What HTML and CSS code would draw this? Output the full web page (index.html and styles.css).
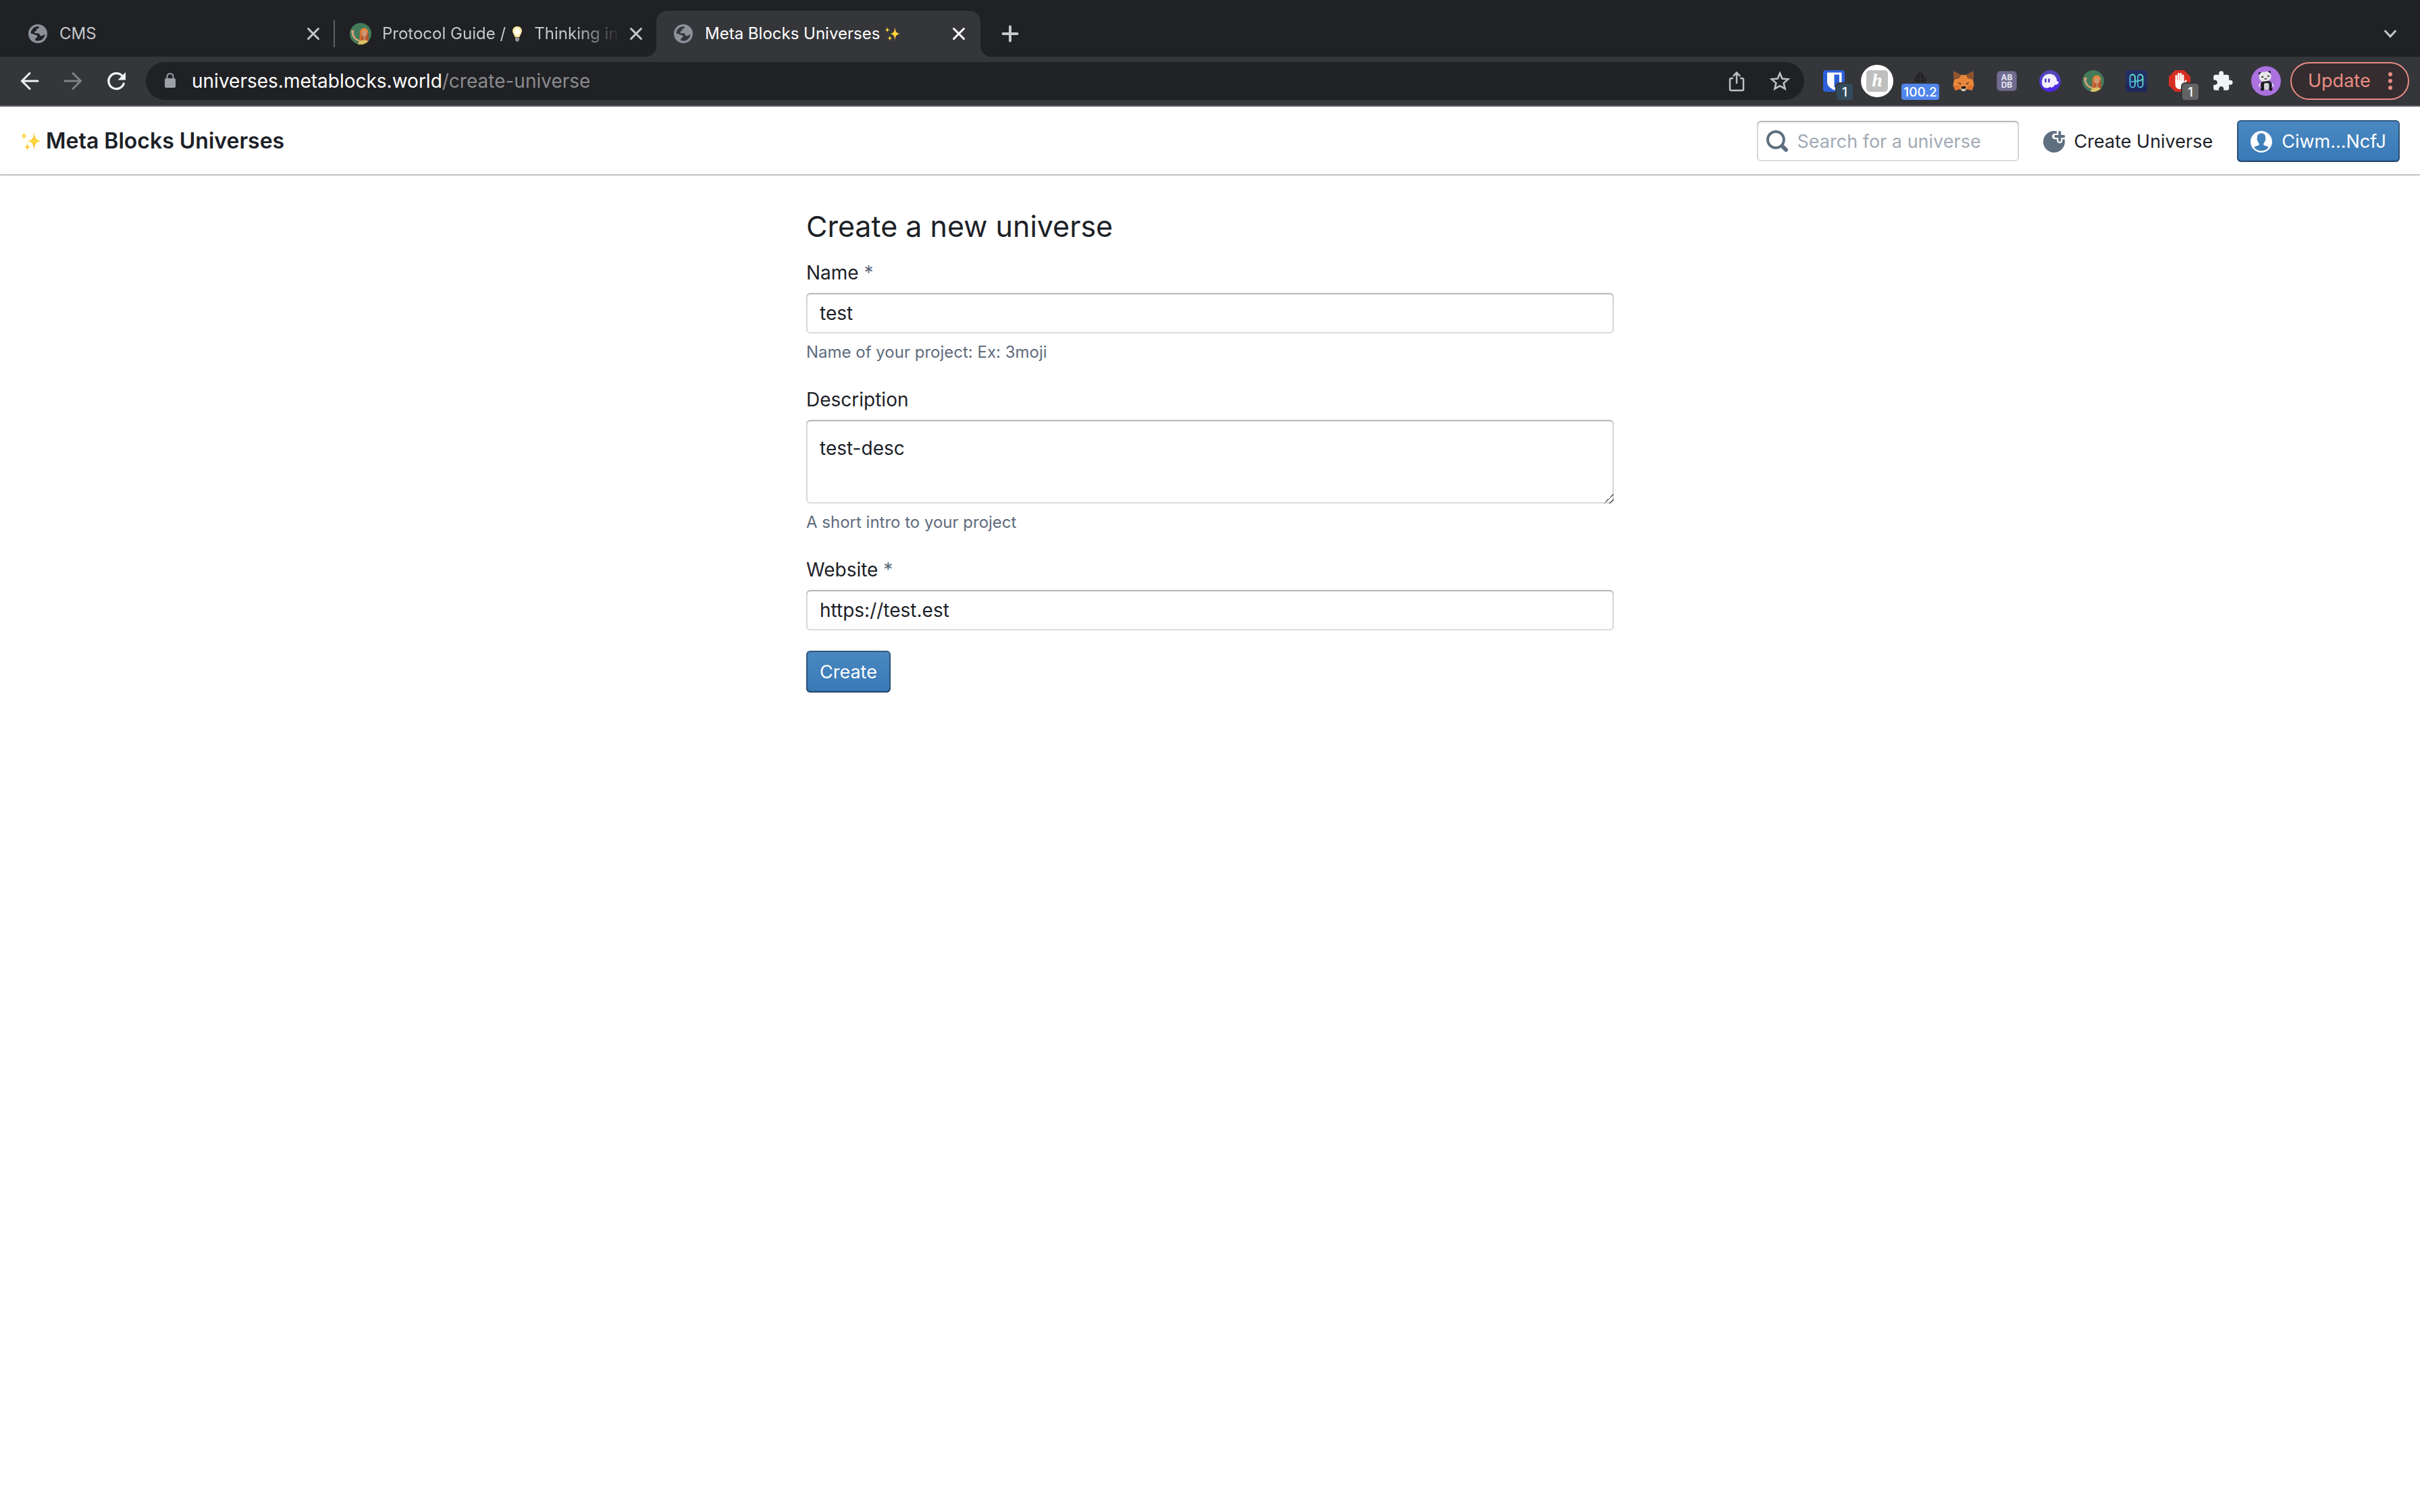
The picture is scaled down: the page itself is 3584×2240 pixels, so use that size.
FILE: index.html
```html
<!DOCTYPE html>
<html lang="en">
<head>
    <meta charset="UTF-8">
    <meta name="viewport" content="width=device-width, initial-scale=1.0">
    <title>Meta Blocks Universes</title>
    <link rel="stylesheet" href="styles.css">
</head>
<body>
    <!-- shared icons -->
    <svg class="sprite" xmlns="http://www.w3.org/2000/svg" aria-hidden="true">
        <defs>
            <linearGradient id="spark" x1="0" y1="0" x2="0" y2="1">
                <stop offset="0" stop-color="#fbb040"/>
                <stop offset="0.5" stop-color="#ffd93b"/>
                <stop offset="1" stop-color="#f9a93a"/>
            </linearGradient>
            <linearGradient id="phantom" x1="0" y1="0" x2="0" y2="1">
                <stop offset="0" stop-color="#534bb1"/>
                <stop offset="1" stop-color="#4f24ee"/>
            </linearGradient>
            <linearGradient id="harmony" x1="0" y1="1" x2="1" y2="0">
                <stop offset="0" stop-color="#3fa8e8"/>
                <stop offset="1" stop-color="#6ff5c0"/>
            </linearGradient>
            <radialGradient id="bulb">
                <stop offset="0.4" stop-color="#fffdf0"/>
                <stop offset="1" stop-color="#fbdf8a"/>
            </radialGradient>
            <clipPath id="round"><circle cx="16" cy="16" r="16"/></clipPath>
            <mask id="plusCut">
                <rect width="16" height="16" fill="#fff"/>
                <path d="M12.2 0v7M8.6 4H16" stroke="#000" stroke-width="4.2" stroke-linecap="round"/>
            </mask>
        </defs>
        <symbol id="globe" viewBox="0 0 28 28">
            <circle cx="14" cy="14" r="14" fill="#8b9198"/>
            <path d="M3.6 13.6C3.7 8 8.2 3.5 14 3.3L16 3.6C16 5.5 15.4 6.2 13.6 6.5C12.2 6.8 11.9 7.6 12 8.8C12 10 11.2 10.4 9.8 10.5C9 10.7 8.9 12 9.6 13L14 13.2C16.2 13.5 17.3 14.8 17.4 17L20 17.2C21.3 17 22 15.5 24.5 14.8C24 20.5 19.5 24.6 14 24.6L10.3 24V20.8C12.3 20.5 13.5 19.5 13.3 18C13.1 16.5 12.2 15.6 10.5 15.6C8.5 15.6 7.5 14 3.6 13.6Z" fill="currentColor"/>
        </symbol>
        <symbol id="cross" viewBox="0 0 24 24">
            <path d="M4.5 4.5l15 15M19.5 4.5l-15 15" stroke="currentColor" stroke-width="3" stroke-linecap="round"/>
        </symbol>
        <symbol id="sparkles" viewBox="0 0 32 32">
            <path d="M20.5 2.5C21.5 11.5 23 14.5 31 16C23 17.5 21.5 20.5 20.5 29.5C19.5 20.5 18 17.5 11 16C18 14.5 19.5 11.5 20.5 2.5Z" fill="url(#spark)"/>
            <path d="M5.5 2C6 6.5 7 7.6 10.5 8.3C7 9 6 10.2 5.5 14.5C5 10.2 4 9 1 8.3C4 7.6 5 6.5 5.5 2Z" fill="url(#spark)"/>
            <path d="M10.5 18.5C11 23 12 24 15.5 24.7C12 25.4 11 26.5 10.5 31C10 26.5 9 25.4 5.5 24.7C9 24 10 23 10.5 18.5Z" fill="url(#spark)"/>
        </symbol>
        <symbol id="girl" viewBox="0 0 32 32">
            <g clip-path="url(#round)">
                <rect width="32" height="32" fill="#447a5a"/>
                <path d="M4 14.5C5 21 8 25 15 26.5" fill="none" stroke="#d9a27a" stroke-width="2.6" stroke-linecap="round"/>
                <path d="M2 11l1 4.5 3-.5L6.5 10.5Z" fill="#d9a27a"/>
                <path d="M15 26C14 18 14.5 8.5 21 8C27.5 8 28.5 16 27.5 27Z" fill="#b9542a"/>
                <path d="M15 15C15 10 18 7.5 21 7.5C25.5 7.5 27.5 11 27.5 15L21 11.5Z" fill="#e8853a"/>
                <path d="M15 14l3-1.5-1.5 13H15Z" fill="#dc7233"/>
                <ellipse cx="21.5" cy="15.5" rx="4" ry="4.8" fill="#cf9874"/>
                <path d="M20 19.5h3.5V26H20z" fill="#bb805c"/>
                <path d="M12 32C13 26.5 16 25.5 21.5 25.5C27 25.5 29 28 29 32Z" fill="#dcc062"/>
            </g>
        </symbol>
    </svg>

    <div class="tab-strip">
        <div class="tab">
            <svg class="tab-icon"><use href="#globe" x="2" y="2" width="28" height="28"/></svg>
            <span class="tab-title">CMS</span>
            <button class="tab-close" type="button" aria-label="Close tab"><svg><use href="#cross"/></svg></button>
        </div>
        <div class="tab tab-divided">
            <svg class="tab-icon" viewBox="0 0 32 32"><use href="#girl"/></svg>
            <span class="tab-title faded">Protocol Guide / <svg class="bulb" viewBox="0 0 16 24"><path d="M8 1C3.5 1 1 4 1 8C1 11 4 14 4.5 17h7C12 14 15 11 15 8C15 4 12.5 1 8 1Z" fill="url(#bulb)"/><path d="M5 17.5h6V21L9.5 23.5h-3L5 21Z" fill="#97999c"/></svg>&nbsp; Thinking in</span>
            <button class="tab-close" type="button" aria-label="Close tab"><svg><use href="#cross"/></svg></button>
        </div>
        <div class="tab active">
            <svg class="tab-icon"><use href="#globe" x="2" y="2" width="28" height="28"/></svg>
            <span class="tab-title">Meta Blocks Universes <svg class="tab-sparkles"><use href="#sparkles"/></svg></span>
            <button class="tab-close" type="button" aria-label="Close tab"><svg><use href="#cross"/></svg></button>
        </div>
        <button class="strip-button" type="button" aria-label="New tab">
            <svg viewBox="0 0 48 48"><path d="M24 13.5v21M13.5 24h21" stroke="currentColor" stroke-width="4" stroke-linecap="round"/></svg>
        </button>
        <button class="strip-button strip-menu" type="button" aria-label="Search tabs">
            <svg viewBox="0 0 48 48"><path d="M16.5 20l7.5 8 7.5-8" fill="none" stroke="currentColor" stroke-width="3" stroke-linecap="round"/></svg>
        </button>
    </div>

    <div class="toolbar">
        <div class="nav-buttons">
            <button class="icon-button" type="button" aria-label="Back">
                <svg viewBox="0 0 48 48"><path d="M36 24H13M24 12.5L12.5 24L24 35.5" fill="none" stroke="#f1f3f4" stroke-width="3" stroke-linecap="round"/></svg>
            </button>
            <button class="icon-button" type="button" aria-label="Forward">
                <svg viewBox="0 0 48 48"><path d="M12 24h23M24 12.5L35.5 24L24 35.5" fill="none" stroke="#818286" stroke-width="3" stroke-linecap="round"/></svg>
            </button>
            <button class="icon-button" type="button" aria-label="Reload">
                <svg viewBox="0 0 48 48"><path d="M35.2 28A11.5 11.5 0 1 1 33 16.5" fill="none" stroke="#f1f3f4" stroke-width="3.4" stroke-linecap="round"/><path d="M38 11v11.5H26.5Z" fill="#f1f3f4"/></svg>
            </button>
        </div>
        <div class="address-bar">
            <svg class="lock" viewBox="0 0 24 32"><path d="M7.5 14V9.5a4.5 4.5 0 0 1 9 0V14" fill="none" stroke="#9aa0a6" stroke-width="2"/><rect x="4" y="12" width="16" height="14" rx="2" fill="#9aa0a6"/></svg>
            <div class="url">universes.metablocks.world<span>/create-universe</span></div>
            <button class="icon-button" type="button" aria-label="Share">
                <svg viewBox="0 0 48 48" fill="none" stroke="#bdc1c6" stroke-width="2.5"><path d="M19 20h-3a2 2 0 0 0-2 2v14a2 2 0 0 0 2 2h16a2 2 0 0 0 2-2V22a2 2 0 0 0-2-2h-3M24 28V12M18.8 16.8L24 11.6l5.2 5.2"/></svg>
            </button>
            <button class="icon-button" type="button" aria-label="Bookmark this tab">
                <svg viewBox="0 0 48 48"><path d="M24 12.5l3.4 8 8.8.8-6.6 5.8 2 8.6L24 31.2l-7.6 4.5 2-8.6-6.6-5.8 8.8-.8Z" fill="none" stroke="#bdc1c6" stroke-width="2.6"/></svg>
            </button>
        </div>
        <div class="extensions">
            <button class="icon-button" type="button" aria-label="Password manager">
                <svg viewBox="0 0 48 48"><rect x="8" y="8" width="32" height="32" rx="4" fill="#2b60d8"/><path d="M14 11.5h21.5V25C35.5 31 31 35 24.7 37.5C18.5 35 14 31 14 25Z" fill="#fff"/><path d="M24.5 14.5H32V25C32 29 29 31.5 24.5 33.5Z" fill="#2b60d8"/></svg>
                <span class="badge badge-slate">1</span>
            </button>
            <button class="icon-button" type="button" aria-label="Coupons">
                <svg viewBox="0 0 48 48"><circle cx="24" cy="24" r="24" fill="#fff"/><rect x="8" y="8" width="32" height="32" rx="5" fill="#bfbfbf"/><text x="24" y="32" class="logo-h">h</text></svg>
            </button>
            <button class="icon-button" type="button" aria-label="Gas price">
                <svg viewBox="0 0 48 48"><path d="M24 8L14 24l10 4 10-4Z" fill="#232325"/><path d="M24 8v20M14.5 24L24 19.5l9.5 4.5" fill="none" stroke="#3a3a3d" stroke-width="1"/></svg>
                <span class="badge badge-blue">100.2</span>
            </button>
            <button class="icon-button" type="button" aria-label="Wallet">
                <svg viewBox="0 0 48 48">
                    <path d="M9 9.5L20.5 15h7L39 9.5L38 22l1.5 8.5L36.5 38l-7.5-2-3 2.5h-4L19 36l-7.5 2L8.5 30.5L10 22Z" fill="#e8873a"/>
                    <path d="M9 9.5L20.5 15L17.5 20L10 22L9 17Z" fill="#8d532f"/>
                    <path d="M39 9.5L27.5 15L30.5 20L38 22L39 17Z" fill="#8d532f"/>
                    <path d="M15 25.5l5.5 2-1 2.5Z" fill="#5d3f30"/>
                    <path d="M33 25.5l-5.5 2 1 2.5Z" fill="#5d3f30"/>
                    <path d="M11.5 38L9 30.5h8L19 36Z" fill="#dc7430"/>
                    <path d="M36.5 38L39 30.5h-8L29 36Z" fill="#dc7430"/>
                    <path d="M19.5 35.5L21 33.5h6l1.5 2-2.5 3.5h-4Z" fill="#d9c8ba"/>
                    <path d="M21 32h6l.5 3.5h-7Z" fill="#1c1c1c"/>
                </svg>
            </button>
            <button class="icon-button" type="button" aria-label="Address book">
                <svg viewBox="0 0 48 48"><rect x="9.5" y="9.5" width="29" height="29" rx="5" fill="#716c90" stroke="#5d5a78" stroke-width="1"/><text x="24" y="22.5" class="logo-ab">AB</text><text x="24" y="33.5" class="logo-ab">DB</text></svg>
            </button>
            <button class="icon-button" type="button" aria-label="Phantom">
                <svg viewBox="0 0 48 48"><circle cx="24" cy="24" r="16" fill="url(#phantom)"/><path d="M12 26C12 18 17 13.5 23.5 13.5C30 13.5 34 18 34.2 23.5C34.5 25 36 25 37 25C36.5 28.5 34 30 31 29.8C29 34 25.5 34.5 24 32.5C21 36 12 35.5 12 26Z" fill="#f3f0fc"/><path d="M17.5 21.5v3.5M22.5 21.5v3.5" stroke="#4b3cc4" stroke-width="2.6" stroke-linecap="round"/></svg>
            </button>
            <button class="icon-button" type="button" aria-label="Docs">
                <svg viewBox="0 0 48 48"><use href="#girl" x="8" y="8" width="32" height="32"/></svg>
            </button>
            <button class="icon-button" type="button" aria-label="Harmony">
                <svg viewBox="0 0 48 48"><rect x="8" y="8" width="32" height="32" rx="4" fill="#222f63"/><path d="M8 30C20 22 30 24 40 33v3a4 4 0 0 1-4 4H12a4 4 0 0 1-4-4Z" fill="#20285a"/><g fill="none" stroke="url(#harmony)" stroke-width="1.8"><rect x="14.5" y="14.5" width="7.5" height="19" rx="3.7"/><rect x="26" y="14.5" width="7.5" height="19" rx="3.7"/><path d="M14.5 26C18 24 20 24.8 24 24.5C28 24.2 30 23.5 33.5 21.5"/></g></svg>
            </button>
            <button class="icon-button" type="button" aria-label="Ad blocker">
                <svg viewBox="0 0 48 48"><path d="M17.5 8h13L40 17.5v13L30.5 40h-13L8 30.5v-13Z" fill="#d52d22"/><path d="M19 25V16.5M22.4 24V13.5M25.8 24V13.5M29 25V16" stroke="#fff" stroke-width="2.8" stroke-linecap="round"/><path d="M17.6 23h12.8v3l2.6-3.5c1-.8 2 .2 1.5 1.2L30.5 32C29 35 26.5 36 24 36C19.5 36 17.6 33 17.6 29Z" fill="#fff"/></svg>
                <span class="badge badge-gray">1</span>
            </button>
            <button class="icon-button" type="button" aria-label="Extensions">
                <svg viewBox="0 0 48 48"><path transform="translate(7.5 8) scale(1.35)" d="M20.5 11H19V7c0-1.1-.9-2-2-2h-4V3.5a2.5 2.5 0 0 0-5 0V5H4c-1.1 0-1.99.9-1.99 2v3.8H3.5c1.49 0 2.7 1.21 2.7 2.7s-1.21 2.7-2.7 2.7H2V20c0 1.1.9 2 2 2h3.8v-1.5c0-1.49 1.21-2.7 2.7-2.7s2.7 1.21 2.7 2.7V22H17c1.1 0 2-.9 2-2v-4h1.5a2.5 2.5 0 0 0 0-5z" fill="#f1f3f4"/></svg>
            </button>
            <button class="icon-button" type="button" aria-label="Profile">
                <svg viewBox="0 0 48 48">
                    <circle cx="24" cy="24" r="22" fill="#ab72df"/>
                    <ellipse cx="24.5" cy="30" rx="8.5" ry="7" fill="#1d1d20"/>
                    <circle cx="15" cy="13" r="2.2" fill="#1d1d20"/><circle cx="29" cy="11" r="2" fill="#1d1d20"/>
                    <rect x="13.5" y="10.5" width="18" height="14" rx="6.5" transform="rotate(-8 22 17)" fill="#e6e6e8"/>
                    <path d="M18 18.3l1.5-.7M26.8 16.8l1.5-.1" stroke="#1d1d20" stroke-width="1.8" stroke-linecap="round"/>
                    <path d="M21.5 20.5l2 .8 1.5-1.3" fill="none" stroke="#1d1d20" stroke-width="1.2"/>
                    <rect x="21" y="27" width="7.5" height="10" rx="2" fill="#cfcfd6"/>
                    <circle cx="18.5" cy="36" r="2.6" fill="#1d1d20"/><circle cx="31" cy="36" r="2.6" fill="#1d1d20"/>
                    <path d="M15 28.5l-1 3M33.5 28.5l1 3" stroke="#e6e6e8" stroke-width="2" stroke-linecap="round"/>
                </svg>
            </button>
        </div>
        <button class="update-button" type="button">Update
            <svg viewBox="0 0 8 28"><circle cx="4" cy="4" r="3"/><circle cx="4" cy="14" r="3"/><circle cx="4" cy="24" r="3"/></svg>
        </button>
    </div>

    <header class="navbar">
        <a class="brand" href="#"><svg><use href="#sparkles"/></svg>Meta Blocks Universes</a>
        <div class="nav-actions">
            <div class="search">
                <svg class="bp-icon" viewBox="0 0 16 16"><path d="M15.55 13.43l-2.67-2.68a6.94 6.94 0 0 0 1.11-3.76c0-3.87-3.13-7-7-7s-7 3.13-7 7 3.13 7 7 7c1.39 0 2.68-.42 3.76-1.11l2.68 2.67a1.498 1.498 0 1 0 2.12-2.12zm-8.56-1.44c-2.76 0-5-2.24-5-5s2.24-5 5-5 5 2.24 5 5-2.24 5-5 5z"/></svg>
                <input type="search" placeholder="Search for a universe" aria-label="Search for a universe">
            </div>
            <a class="nav-link" href="#">
                <svg class="bp-icon" viewBox="0 0 16 16"><circle cx="8" cy="8" r="8" mask="url(#plusCut)"/><path d="M12.2 1v6M9.2 4h6" stroke="#5f6f80" stroke-width="2" stroke-linecap="round"/></svg>
                Create Universe
            </a>
            <button class="primary-button" type="button">
                <svg class="bp-icon" viewBox="0 0 16 16"><path fill-rule="evenodd" d="M8 0a8 8 0 1 0 0 16A8 8 0 0 0 8 0zM13.3 12.2C12.5 11.2 10 11 9.7 10.3C9.4 9.5 9.7 9.2 10.2 8.6C10.6 8.1 10.7 7.5 10.9 6.9C11.4 6.7 11.4 5.6 11 5.4C11.3 3.2 10.3 1.8 8 1.8S4.7 3.2 5 5.4C4.6 5.6 4.6 6.7 5.1 6.9C5.3 7.5 5.4 8.1 5.8 8.6C6.3 9.2 6.6 9.5 6.3 10.3C6 11 3.5 11.2 2.7 12.2A6.7 6.7 0 0 0 13.3 12.2Z"/></svg>
                Ciwm...NcfJ
            </button>
        </div>
    </header>

    <main class="content">
        <h1>Create a new universe</h1>
        <form class="universe-form">
            <div class="form-group">
                <label for="name">Name <span class="required">*</span></label>
                <input type="text" id="name" value="test">
                <p class="helper-text">Name of your project: Ex: 3moji</p>
            </div>
            <div class="form-group">
                <label for="description">Description</label>
                <textarea id="description">test-desc</textarea>
                <p class="helper-text">A short intro to your project</p>
            </div>
            <div class="form-group">
                <label for="website">Website <span class="required">*</span></label>
                <input type="text" id="website" value="https://test.est">
            </div>
            <button class="primary-button" type="submit">Create</button>
        </form>
    </main>
</body>
</html>
```
FILE: styles.css
```css
* {
    margin: 0;
    padding: 0;
    box-sizing: border-box;
}

body {
    min-height: 100vh;
    background: #fff;
    color: #1c2127;
    font-family: Inter, "Liberation Sans", sans-serif;
    font-size: 28px;
    line-height: 36px;
}

button,
input,
textarea {
    font: inherit;
    color: inherit;
    border: none;
    background: none;
}

a {
    color: inherit;
    text-decoration: none;
}

button {
    cursor: pointer;
}

svg {
    display: block;
}

.sprite {
    position: absolute;
    width: 0;
    height: 0;
}

/* Tab strip */
.tab-strip {
    display: flex;
    align-items: flex-end;
    height: 84px;
    padding: 0 20px 0 16px;
    background: #202124;
    color: #c4c7cc;
    font-size: 24px;
    line-height: 32px;
}

.tab {
    position: relative;
    display: flex;
    align-items: center;
    width: 478px;
    height: 68px;
    padding: 0 18px 0 24px;
    color: #202124;
}

.tab.active {
    width: 480px;
    padding-right: 20px;
    background: #35363a;
    border-radius: 16px 16px 0 0;
    color: #35363a;
}

/* curved feet of the selected tab */
.tab.active::before,
.tab.active::after {
    content: "";
    position: absolute;
    bottom: 0;
    width: 16px;
    height: 16px;
}

.tab.active::before {
    right: 100%;
    background: radial-gradient(circle at 0 0, transparent 16px, #35363a 16px);
}

.tab.active::after {
    left: 100%;
    background: radial-gradient(circle at 100% 0, transparent 16px, #35363a 16px);
}

.tab-divided::before {
    content: "";
    position: absolute;
    left: 0;
    width: 2px;
    height: 40px;
    background: #5f6165;
}

.tab-icon {
    width: 32px;
    height: 32px;
    flex: none;
}

.tab-title {
    flex: 1;
    margin: 0 12px 0 16px;
    overflow: hidden;
    white-space: nowrap;
    color: #c4c7cc;
}

.tab-title.faded {
    mask-image: linear-gradient(to left, transparent, #000 64px);
}

.tab-title svg {
    display: inline-block;
    vertical-align: -4px;
}

.active .tab-title,
.active .tab-close {
    color: #fff;
}

.bulb {
    width: 16px;
    height: 24px;
    margin: 0 4px 0 2px;
}

.tab-sparkles {
    width: 24px;
    height: 24px;
}

.tab-close {
    width: 24px;
    height: 24px;
    color: #c4c7cc;
}

.tab-close svg {
    width: 24px;
    height: 24px;
}

.strip-button {
    width: 48px;
    height: 48px;
    margin: 0 0 10px 20px;
    color: #c4c7cc;
}

.strip-menu {
    margin-left: auto;
}

/* Toolbar */
.toolbar {
    display: flex;
    align-items: center;
    height: 74px;
    padding: 0 16px 0 20px;
    background: #35363a;
    border-bottom: 2px solid #5f6165;
}

.nav-buttons,
.extensions {
    display: flex;
    gap: 16px;
}

.icon-button {
    position: relative;
    width: 48px;
    height: 48px;
    flex: none;
}

.address-bar {
    flex: 1;
    display: flex;
    align-items: center;
    height: 56px;
    margin: 0 20px;
    padding: 0 12px 0 24px;
    border-radius: 28px;
    background: #202124;
    color: #fff;
}

.address-bar .icon-button {
    margin-left: 16px;
}

.lock {
    width: 24px;
    height: 32px;
    margin-right: 20px;
}

.url {
    flex: 1;
}

.url span {
    color: #8a8b8e;
}

.badge {
    position: absolute;
    top: 28px;
    left: 28px;
    width: 24px;
    height: 24px;
    border-radius: 4px;
    box-shadow: 0 0 0 2px #35363a;
    color: #fff;
    font-size: 19px;
    line-height: 26px;
    font-weight: 500;
    text-align: center;
}

.badge-slate {
    background: #334b5c;
}

.badge-blue {
    left: -4px;
    width: 56px;
    background: #5086ec;
}

.badge-gray {
    background: #636363;
}

.logo-h {
    font: italic bold 28px "Liberation Serif", serif;
    text-anchor: middle;
    fill: #fff;
}

.logo-ab {
    font: bold 12px Inter, sans-serif;
    text-anchor: middle;
    fill: #e6e4f0;
}

.update-button {
    display: flex;
    align-items: center;
    justify-content: space-between;
    width: 176px;
    height: 56px;
    margin-left: 12px;
    padding: 0 22px 0 24px;
    border: 2px solid #e88c84;
    border-radius: 28px;
    background: #352c2f;
    color: #e88c84;
    fill: #e88c84;
    font-size: 27px;
}

.update-button svg {
    width: 8px;
    height: 28px;
}

/* Page header */
.navbar {
    display: flex;
    align-items: center;
    justify-content: space-between;
    height: 100px;
    padding: 2px 30px 0;
    box-shadow: 0 0 0 2px rgba(17, 20, 24, 0.1), 0 2px 2px rgba(17, 20, 24, 0.2);
    clip-path: inset(0 0 -8px);
    font-size: 27px;
}

.brand {
    display: flex;
    align-items: center;
    gap: 6px;
    font-size: 32px;
    font-weight: 600;
}

.brand svg {
    width: 32px;
    height: 32px;
}

.nav-actions {
    display: flex;
    align-items: center;
    gap: 16px;
}

.bp-icon {
    width: 32px;
    height: 32px;
    flex: none;
    fill: #5f6f80;
}

.search {
    position: relative;
    width: 388px;
}

.search .bp-icon {
    position: absolute;
    left: 14px;
    top: 14px;
}

input,
textarea {
    display: block;
    width: 100%;
    height: 60px;
    padding: 0 20px;
    border-radius: 6px;
    background: #fff;
    box-shadow: inset 0 0 0 2px rgba(17, 20, 24, 0.15), inset 0 2px 2px rgba(17, 20, 24, 0.2);
}

textarea {
    height: 124px;
    padding: 24px 20px;
    resize: vertical;
}

textarea::-webkit-resizer {
    background: linear-gradient(135deg, transparent 50%, #555 50%, #555 56%, transparent 56%, transparent 76%, #555 76%, #555 82%, transparent 82%);
}

.search input {
    padding-left: 60px;
}

input::placeholder {
    color: #a1aab5;
}

.nav-link {
    display: flex;
    align-items: center;
    gap: 14px;
    padding: 2px 20px 0;
}

.primary-button {
    display: flex;
    align-items: center;
    gap: 14px;
    height: 62px;
    padding: 2px 20px 0;
    border-radius: 6px;
    background: linear-gradient(#4a88c0, #3879b7);
    box-shadow: inset 0 0 0 2px rgba(17, 20, 24, 0.4), inset 0 -2px 2px rgba(17, 20, 24, 0.2);
    color: #fff;
    font-size: 27px;
}

.primary-button .bp-icon {
    fill: #fff;
}

/* Create form */
.content {
    max-width: 1196px;
    margin: 0 auto;
    padding-top: 52px;
}

h1 {
    margin-bottom: 26px;
    font-size: 43px;
    line-height: 50px;
    font-weight: 400;
}

.form-group {
    margin-bottom: 36px;
}

.form-group:last-of-type {
    margin-bottom: 30px;
}

.form-group label {
    display: block;
    margin-bottom: 12px;
}

.required,
.helper-text {
    color: #5f6b7c;
}

.helper-text {
    margin-top: 12px;
    font-size: 24px;
    line-height: 32px;
}
```
